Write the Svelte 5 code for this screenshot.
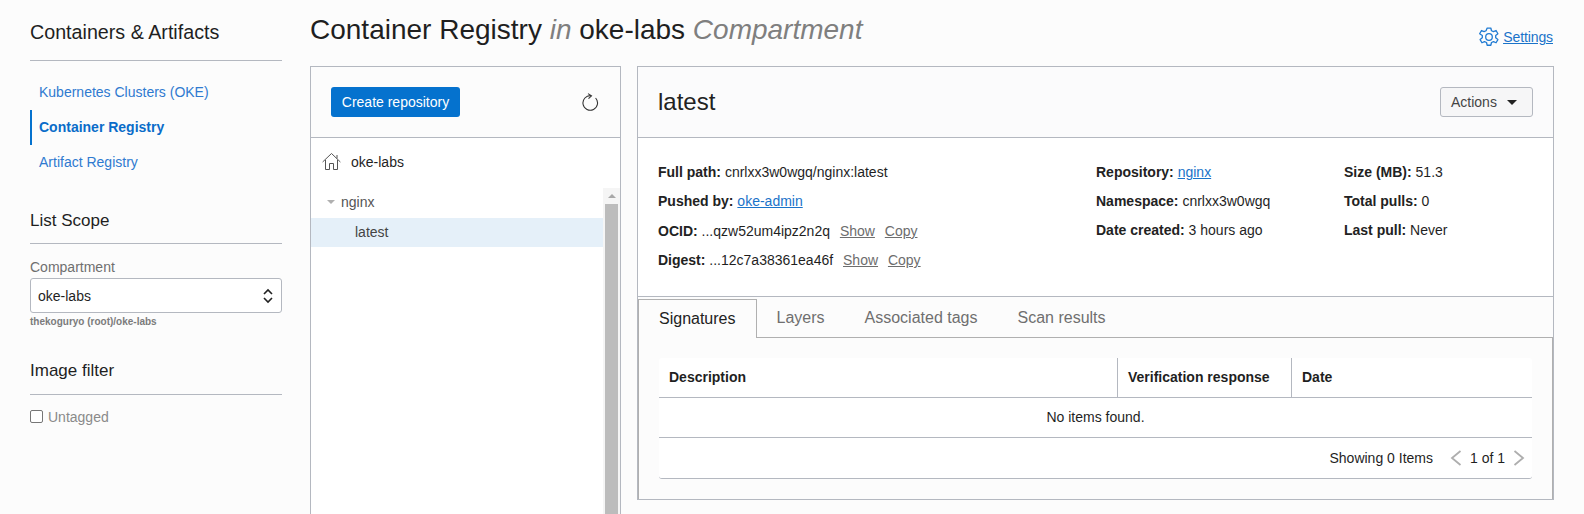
<script>
  const nav = [
    { label: 'Kubernetes Clusters (OKE)', active: false },
    { label: 'Container Registry', active: true },
    { label: 'Artifact Registry', active: false }
  ];
  const tabs = ['Signatures', 'Layers', 'Associated tags', 'Scan results'];
</script>

<div class="page">
  <aside class="side">
    <h2 class="side-title first">Containers &amp; Artifacts</h2>
    <ul class="nav">
      {#each nav as item}
        <li class:active={item.active}><span>{item.label}</span></li>
      {/each}
    </ul>
    <h2 class="side-title scope">List Scope</h2>
    <div class="field-label">Compartment</div>
    <div class="select">
      <span>oke-labs</span>
      <svg width="12" height="16" viewBox="0 0 12 16" fill="none" stroke="#222" stroke-width="1.6"><path d="M2 6l4-4 4 4M2 10l4 4 4-4"/></svg>
    </div>
    <div class="helper">thekoguryo (root)/oke-labs</div>
    <h2 class="side-title filter">Image filter</h2>
    <label class="check"><span class="box"></span><span>Untagged</span></label>
  </aside>

  <main class="main">
    <header class="top">
      <h1>Container Registry <em>in</em> oke-labs <em>Compartment</em></h1>
      <a class="settings" href="#settings">
        <svg width="22" height="22" viewBox="0 0 24 24" fill="none" stroke="#1f7ad2" stroke-width="1.4" stroke-linejoin="round"><circle cx="12" cy="12" r="3.6"/><path d="M10 2.2h4l.7 3 2.2 1 2.8-1.3 2 3.5-2.4 1.9v2.6l2.4 1.9-2 3.5-2.8-1.3-2.2 1-.7 3h-4l-.7-3-2.2-1-2.8 1.3-2-3.5 2.4-1.9v-2.6L1.800 8.400l2-3.500 2.800 1.300 2.200-1z"/></svg>
        <span>Settings</span>
      </a>
    </header>

    <div class="panels">
      <section class="tree">
        <div class="tree-head">
          <button class="primary">Create repository</button>
          <svg width="18" height="18" viewBox="0 0 18 18" fill="none" stroke="#333" stroke-width="1.1"><path d="M10 2.700A7.300 7.300 0 1 0 14.600 5"/><path d="M7 .6l3.500 2.200-3 2.800"/></svg>
        </div>
        <div class="home">
          <svg width="19" height="19" viewBox="0 0 19 19" fill="none" stroke="#555" stroke-width="1"><path d="M.6 10L9.500 1.500l8.900 8.500M15 3v3.500M3.500 8v9.500h4v-6h4v6h4V8"/></svg>
          <span>oke-labs</span>
        </div>
        <div class="tree-body">
          <div class="tree-list">
            <div class="repo"><i class="tri"></i><span>nginx</span></div>
            <div class="img">latest</div>
          </div>
          <div class="scroll">
            <div class="up"></div>
            <div class="thumb"></div>
          </div>
        </div>
      </section>

      <section class="detail">
        <div class="detail-head">
          <h2>latest</h2>
          <button class="actions">Actions <i class="caret"></i></button>
        </div>
        <div class="info">
          <div class="col a">
            <p><b>Full path:</b> cnrlxx3w0wgq/nginx:latest</p>
            <p><b>Pushed by:</b> <a href="#u">oke-admin</a></p>
            <p><b>OCID:</b> ...qzw52um4ipz2n2q <a class="gray" href="#s">Show</a> <a class="gray" href="#c">Copy</a></p>
            <p><b>Digest:</b> ...12c7a38361ea46f <a class="gray" href="#s">Show</a> <a class="gray" href="#c">Copy</a></p>
          </div>
          <div class="col b">
            <p><b>Repository:</b> <a href="#r">nginx</a></p>
            <p><b>Namespace:</b> cnrlxx3w0wgq</p>
            <p><b>Date created:</b> 3 hours ago</p>
          </div>
          <div class="col c">
            <p><b>Size (MB):</b> 51.3</p>
            <p><b>Total pulls:</b> 0</p>
            <p><b>Last pull:</b> Never</p>
          </div>
        </div>
        <div class="tabs-area">
          <div class="tabs">
            {#each tabs as t, i}
              <div class="tab" class:on={i === 0}>{t}</div>
            {/each}
          </div>
          <div class="tab-body">
            <div class="table">
              <div class="thead">
                <div class="th d1">Description</div>
                <div class="th d2">Verification response</div>
                <div class="th d3">Date</div>
              </div>
              <div class="empty">No items found.</div>
              <div class="tfoot">
                <span>Showing 0 Items</span>
                <svg class="pg first-pg" width="12" height="18" viewBox="0 0 12 18" fill="none" stroke="#aeaeae" stroke-width="1.8"><path d="M10.500 2L2 9l8.500 7"/></svg>
                <span>1 of 1</span>
                <svg class="pg" width="12" height="18" viewBox="0 0 12 18" fill="none" stroke="#aeaeae" stroke-width="1.8"><path d="M1.500 2L10 9l-8.500 7"/></svg>
              </div>
            </div>
          </div>
        </div>
      </section>
    </div>
  </main>
</div>

<style>
  :global(body) { margin: 0; background: #fcfcfc; }
  * { box-sizing: border-box; }
  .page {
    display: flex; height: 514px; overflow: hidden;
    font-family: "Liberation Sans", Arial, sans-serif; font-size: 14px; color: #1f1f1f;
  }
  .side { width: 252px; margin-left: 30px; flex: none; }
  .side-title {
    margin: 0; font-size: 17px; font-weight: 400; line-height: 22px; color: #1f1f1f;
    border-bottom: 1px solid #b4b8c0;
  }
  .first { font-size: 19.7px; padding: 21px 0 17px; }
  .nav { list-style: none; margin: 14px 0 0; padding: 0; }
  .nav li {
    height: 35px; line-height: 35px; padding-left: 9px; color: #2f7ad0; font-size: 14px;
    border-left: 0 solid #0572ce;
  }
  .nav li.active { font-weight: 700; color: #0a6cc9; border-left-width: 2px; padding-left: 7px; }
  .scope { margin-top: 30px; padding-bottom: 11px; }
  .field-label { margin-top: 13px; color: #6f6f6f; line-height: 20px; }
  .select {
    margin-top: 1px; height: 35px; border: 1px solid #b4b8c0; border-radius: 3px; background: #fff;
    display: flex; align-items: center; justify-content: space-between; padding: 0 7px 0 7px; font-size: 14px;
  }
  .helper { font-size: 10px; font-weight: 700; color: #7b7b7b; line-height: 12px; margin-top: 3px; }
  .filter { margin-top: 32px; padding-bottom: 12px; }
  .check { display: flex; align-items: center; gap: 5px; margin-top: 14px; color: #8a8a8a; }
  .box { width: 13px; height: 13px; margin-top: -2px; border: 1px solid #767676; border-radius: 2px; background: #fff; }

  .main { margin-left: 28px; width: 1243px; flex: none; }
  .top { display: flex; justify-content: space-between; height: 66px; }
  h1 { margin: 14px 0 0; font-size: 28px; font-weight: 400; line-height: 32px; color: #1f1f1f; }
  h1 em { color: #7f7f7f; }
  .settings { display: flex; align-items: center; gap: 3px; align-self: flex-start; margin-top: 26px; color: #1a73c9; font-size: 14px; letter-spacing: -0.1px; }
  .settings span { text-decoration: underline; }

  .panels { display: flex; gap: 16px; align-items: flex-start; }
  .tree { width: 311px; height: 470px; border: 1px solid #b4b8c0; background: #fff; flex: none; }
  .tree-head {
    height: 71px; border-bottom: 1px solid #b4b8c0; background: #fcfcfc;
    display: flex; align-items: center; justify-content: space-between; padding: 0 21px 0 20px;
  }
  .primary {
    width: 129px; height: 30px; border: 0; border-radius: 3px; background: #0572ce; color: #fff;
    font: 14px "Liberation Sans", Arial, sans-serif; padding: 0;
  }
  .home { display: flex; align-items: center; gap: 10px; height: 49px; padding: 0 0 2px 11px; }
  .tree-body { display: flex; }
  .tree-list { flex: 1; }
  .repo { height: 31px; padding-bottom: 1px; display: flex; align-items: center; padding-left: 16px; gap: 6px; color: #555; }
  .tri { width: 0; height: 0; border: 4px solid transparent; border-top: 4px solid #b0b0b0; border-bottom: 0; }
  .img { height: 29px; line-height: 29px; padding-left: 44px; background: #e5f0f9; color: #444; }
  .scroll { width: 17px; height: 340px; margin-top: 1px; background: #f5f5f5; padding: 0 2px; }
  .up { width: 0; height: 0; margin: 6px auto 6px; border: 4px solid transparent; border-bottom: 4px solid #a8a8a8; border-top: 0; }
  .thumb { height: 320px; margin-top: 5px; background: #bcbcbc; }

  .detail { width: 917px; height: 434px; border: 1px solid #b4b8c0; flex: none; background: #fff; }
  .detail-head {
    height: 71px; border-bottom: 1px solid #b4b8c0; background: #fbfbfc;
    display: flex; align-items: center; justify-content: space-between; padding: 0 20px;
  }
  .detail-head h2 { margin: 0; font-size: 24px; font-weight: 400; color: #222; }
  .actions {
    width: 93px; height: 30px; border: 1px solid #b4b8c0; border-radius: 3px; background: #f6f6f7; color: #444;
    font: 14px "Liberation Sans", Arial, sans-serif; display: flex; align-items: center; gap: 10px; padding: 0 0 0 10px;
  }
  .caret { width: 0; height: 0; border: 5px solid transparent; border-top: 5px solid #222; border-bottom: 0; }

  .info { height: 159px; display: flex; padding-top: 20px; border-bottom: 1px solid #b4b8c0; }
  .col p { margin: 0; height: 29px; line-height: 29px; white-space: nowrap; }
  .a p { height: 29.4px; }
  .col b { color: #222; }
  .col a { color: #1a73c9; }
  .col a.gray { color: #6d6d6d; margin-left: 6px; }
  .a { width: 458px; padding-left: 20px; }
  .b { width: 248px; }
  .tabs-area { background: #fcfcfc; height: 202px; }
  .tabs { display: flex; height: 41px; padding-top: 2px; border-bottom: 1px solid #b0b0b0; }
  .tab { padding: 0 20px; line-height: 37px; font-size: 16px; color: #6f6f6f; }
  .tab.on {
    height: 39px; color: #222; border: 1px solid #b0b0b0; border-bottom: 0;
    background: #fcfcfc; line-height: 38px;
  }
  .tab-body { padding: 20px 20px 0 20px; border-left: 1px solid #b0b0b0; border-right: 1px solid #b0b0b0; height: 161px; }
  .table { background: #fff; height: 121px; border-bottom: 1px solid #b4b8c0; border-radius: 3px; }
  .thead { display: flex; height: 40px; border-bottom: 1px solid #b4b8c0; font-weight: 700; }
  .th { padding-left: 10px; line-height: 39px; }
  .d1 { width: 458px; }
  .d2 { width: 174px; border-left: 1px solid #b4b8c0; }
  .d3 { flex: 1; border-left: 1px solid #b4b8c0; }
  .empty { height: 40px; line-height: 39px; text-align: center; border-bottom: 1px solid #b4b8c0; }
  .tfoot { height: 40px; display: flex; align-items: center; justify-content: flex-end; padding-right: 7px; gap: 8px; }
  .first-pg { margin-left: 9px; }
</style>
